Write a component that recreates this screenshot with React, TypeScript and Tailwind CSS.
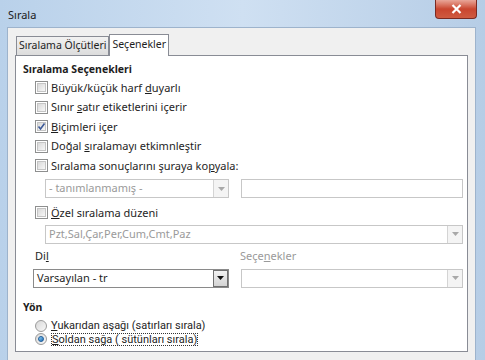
import type { ReactNode } from "react";

const font = { fontFamily: '"Noto Sans", "Open Sans", sans-serif' };
const tight = { fontFamily: 'Roboto, "Noto Sans", sans-serif' };

function CheckBox({ checked = false }: { checked?: boolean }) {
  return (
    <span className="relative inline-flex h-[13px] w-[13px] shrink-0 items-center justify-center border border-[#8e8f8f] bg-white">
      <span className="h-[9px] w-[9px] border border-[#c4c4c4] bg-gradient-to-br from-[#d9d9d9] to-[#f7f7f7]" />
      {checked && (
        <svg className="absolute left-[1px] top-[1px]" width="9" height="9" viewBox="0 0 9 9">
          <path d="M1.5 4.5 L3.5 7 L7.5 1.5" fill="none" stroke="#3d5a98" strokeWidth="1.6" />
        </svg>
      )}
    </span>
  );
}

function Radio({ checked = false }: { checked?: boolean }) {
  return (
    <span className="inline-flex h-[12px] w-[12px] shrink-0 items-center justify-center rounded-full border border-[#9a9a9a] bg-gradient-to-br from-[#d8d8d8] to-[#f8f8f8]">
      {checked && (
        <span className="h-[6px] w-[6px] rounded-full border border-[#1e5c9a] bg-gradient-to-br from-[#8fd3f7] to-[#1f6bb3]" />
      )}
    </span>
  );
}

function CheckRow({ checked, children }: { checked?: boolean; children: ReactNode }) {
  return (
    <div className="flex h-[19.5px] items-center gap-[3px] pl-[19px]">
      <CheckBox checked={checked} />
      <span className="text-[11px] leading-[14px] text-[#1e1e1e]">{children}</span>
    </div>
  );
}

function Arrow({ color }: { color: string }) {
  return (
    <svg width="7" height="4" viewBox="0 0 7 4">
      <path d="M0 0 H7 L3.5 4 Z" fill={color} />
    </svg>
  );
}

function Combo({
  text,
  enabled = false,
  className,
}: {
  text?: string;
  enabled?: boolean;
  className: string;
}) {
  return (
    <div
      className={`flex h-[19px] items-stretch border bg-white ${
        enabled ? "border-[#8a8a8a]" : "border-[#c7c7c7]"
      } ${className}`}
    >
      <span
        className={`flex flex-1 items-center px-[3px] text-[11px] ${
          enabled ? "text-[#1e1e1e]" : "text-[#9a9a9a]"
        }`}
      >
        {text}
      </span>
      {enabled ? (
        <span className="flex w-[15px] items-center justify-center border border-[#707070] bg-gradient-to-b from-[#f2f2f2] to-[#d4d4d4]">
          <Arrow color="#111" />
        </span>
      ) : (
        <span className="flex w-[15px] items-center justify-center border-l border-[#d4d4d4] bg-[#f4f4f4]">
          <Arrow color="#a8a8a8" />
        </span>
      )}
    </div>
  );
}

export default function App() {
  return (
    <div
      className="flex h-[360px] w-[485px] flex-col overflow-hidden bg-gradient-to-r from-[#b9d1ea] via-[#cfe0f2] to-[#b6cde6]"
      style={font}
    >
      {/* title bar */}
      <div className="flex h-[27px] shrink-0 items-start justify-between">
        <span className="pl-[8px] pt-[7px] text-[11px] text-[#1a1a1a]">Sırala</span>
        <div className="mr-[8px] flex h-[19px] w-[42px] items-center justify-center rounded-b-[4px] border border-t-0 border-[#7a2a22] bg-gradient-to-b from-[#e8a598] via-[#c9452f] to-[#cf5b41]">
          <svg width="11" height="10" viewBox="0 0 11 10">
            <path d="M1.5 1 L9.5 9 M9.5 1 L1.5 9" stroke="#ffffff" strokeWidth="2.2" />
          </svg>
        </div>
      </div>

      <div className="flex flex-1">
        <div className="w-[7px] shrink-0" />
        <div className="flex flex-1 flex-col border-l border-t border-[#9db3cc] bg-[#f0f0f0] pl-[7px] pr-[7px] pt-[5px]">
          {/* tabs */}
          <div className="flex h-[22px] items-end">
            <div className="ml-[1px] flex h-[19px] items-center border border-b-0 border-[#898c95] bg-gradient-to-b from-[#f2f2f2] to-[#dcdcdc] px-[2px] text-[10.5px] text-[#1e1e1e]">
              Sıralama Ölçütleri
            </div>
            <div className="relative z-10 -mb-px flex h-[22px] items-center border border-b-0 border-[#898c95] bg-white px-[2px] pb-[1px] text-[10.5px] text-[#1e1e1e]">
              Seçenekler
            </div>
          </div>

          {/* panel */}
          <div className="flex h-[297px] w-[453px] flex-col border border-[#898c95] bg-white">
            <div className="mt-[6px] flex h-[16px] items-center pl-[7px] text-[10.5px] font-bold text-[#1e1e1e]">
              Sıralama Seçenekleri
            </div>
            <CheckRow>
              Büyük/küçük harf <u>d</u>uyarlı
            </CheckRow>
            <CheckRow>
              Sınır <u>s</u>atır etiketlerini içerir
            </CheckRow>
            <CheckRow checked>
              <u>B</u>içimleri içer
            </CheckRow>
            <CheckRow>
              Doğal <u>s</u>ıralamayı etkimnleştir
            </CheckRow>
            <CheckRow>
              Sıralama sonuçlarını şuraya ko<u>p</u>yala:
            </CheckRow>

            <div className="mt-[3.5px] flex gap-[12px] pl-[29px] pr-[4px]">
              <Combo text="- tanımlanmamış -" className="w-[184px]" />
              <div className="h-[19px] flex-1 border border-[#c7c7c7] bg-white" />
            </div>

            <div className="mt-[5px]">
              <CheckRow>
                <u>Ö</u>zel sıralama düzeni
              </CheckRow>
            </div>

            <div className="mt-[2px] pl-[29px] pr-[4px]">
              <Combo text="Pzt,Sal,Çar,Per,Cum,Cmt,Paz" className="w-full" />
            </div>

            <div className="mt-[5px] flex h-[16px] items-center text-[11px]">
              <span className="w-[224px] pl-[19px] text-[#1e1e1e]">
                Di<u>l</u>
              </span>
              <span className="text-[#9a9a9a]">
                Seçe<u>n</u>ekler
              </span>
            </div>

            <div className="mt-[4px] flex gap-[12px] pl-[17px] pr-[4px]">
              <Combo text="Varsayılan - tr" enabled className="w-[196px]" />
              <Combo className="flex-1" />
            </div>

            <div className="mt-[12px] flex h-[16px] items-center pl-[7px] text-[10.5px] font-bold text-[#1e1e1e]">
              Yön
            </div>

            {/* radio group: rows sit 13px apart, as in the dialog */}
            <div className="mt-[4px] flex flex-col text-[11px] text-[#1e1e1e]" style={tight}>
              <div className="flex h-[13px] items-center gap-[4px] pl-[19px] leading-[12px]">
                <Radio />
                <span>
                  <u>Y</u>ukarıdan aşağı (satırları sırala)
                </span>
              </div>
              <div className="flex h-[13px] items-center gap-[4px] pl-[19px] leading-[11px]">
                <Radio checked />
                <span className="border border-dotted border-[#333]">
                  <u>S</u>oldan sağa ( sütünları sırala)
                </span>
              </div>
            </div>
          </div>
        </div>
        <div className="w-[10px] shrink-0 border-l border-[#9db3cc]" />
      </div>
    </div>
  );
}
